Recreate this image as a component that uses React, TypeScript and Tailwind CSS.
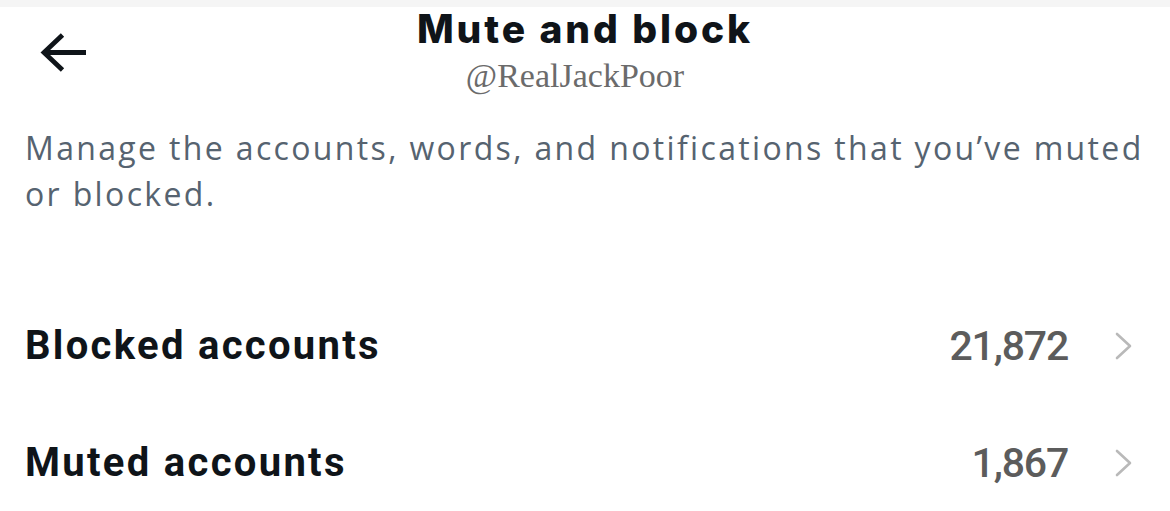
import React from "react";

function Chevron() {
  return (
    <svg width="20" height="30" viewBox="0 0 20 30" fill="none" className="block">
      <path d="M3 3 L16 15 L3 27" stroke="#b9b9b9" strokeWidth="2.6" strokeLinecap="round" strokeLinejoin="round" />
    </svg>
  );
}

function Row({ label, value }: { label: string; value: string }) {
  return (
    <div className="flex h-[117px] items-center justify-between pl-[25px] pr-[36px]">
      <span className="font-['Roboto',sans-serif] text-[40px] font-bold leading-[48px] tracking-[2.3px] text-[#0f1419]">
        {label}
      </span>
      <div className="flex items-center gap-[46px]">
        <span className="font-['Roboto',sans-serif] text-[41px] font-medium leading-[48px] tracking-[-1.2px] text-[#5c5c5c]">
          {value}
        </span>
        <Chevron />
      </div>
    </div>
  );
}

export default function App() {
  return (
    <div className="h-[511px] w-[1170px] overflow-hidden bg-white">
      <div className="h-[7px] bg-[#f5f5f5]" />
      <div className="grid grid-cols-[1fr_auto_1fr] pt-[3px]">
        <div className="pl-[40px] pt-[23px]">
          <svg width="48" height="40" viewBox="0 0 48 40" fill="none" className="block">
            <path d="M4 19.5 H46" stroke="#0f1419" strokeWidth="4.8" />
            <path d="M22.5 2 L4 19.5 L22.5 37" stroke="#0f1419" strokeWidth="4.8" strokeLinejoin="miter" />
          </svg>
        </div>
        <div className="flex flex-col items-center">
          <h1 className="font-['Inter',sans-serif] text-[39px] font-extrabold leading-[38px] tracking-[2.9px] text-[#0f1419]">
            Mute and block
          </h1>
          <span className="mr-[20px] mt-[11px] font-['Liberation_Serif',serif] text-[34px] leading-[34px] text-[#6b6b6b]">
            @RealJackPoor
          </span>
        </div>
        <div />
      </div>
      <p className="mt-[32px] w-[1160px] pl-[25px] font-['Open_Sans',sans-serif] text-[32px] leading-[46px] tracking-[2.35px] text-[#566370]">
        Manage the accounts, words, and notifications that you’ve muted or blocked.
      </p>
      <div className="mt-[70px]">
        <Row label="Blocked accounts" value="21,872" />
        <Row label="Muted accounts" value="1,867" />
      </div>
    </div>
  );
}
